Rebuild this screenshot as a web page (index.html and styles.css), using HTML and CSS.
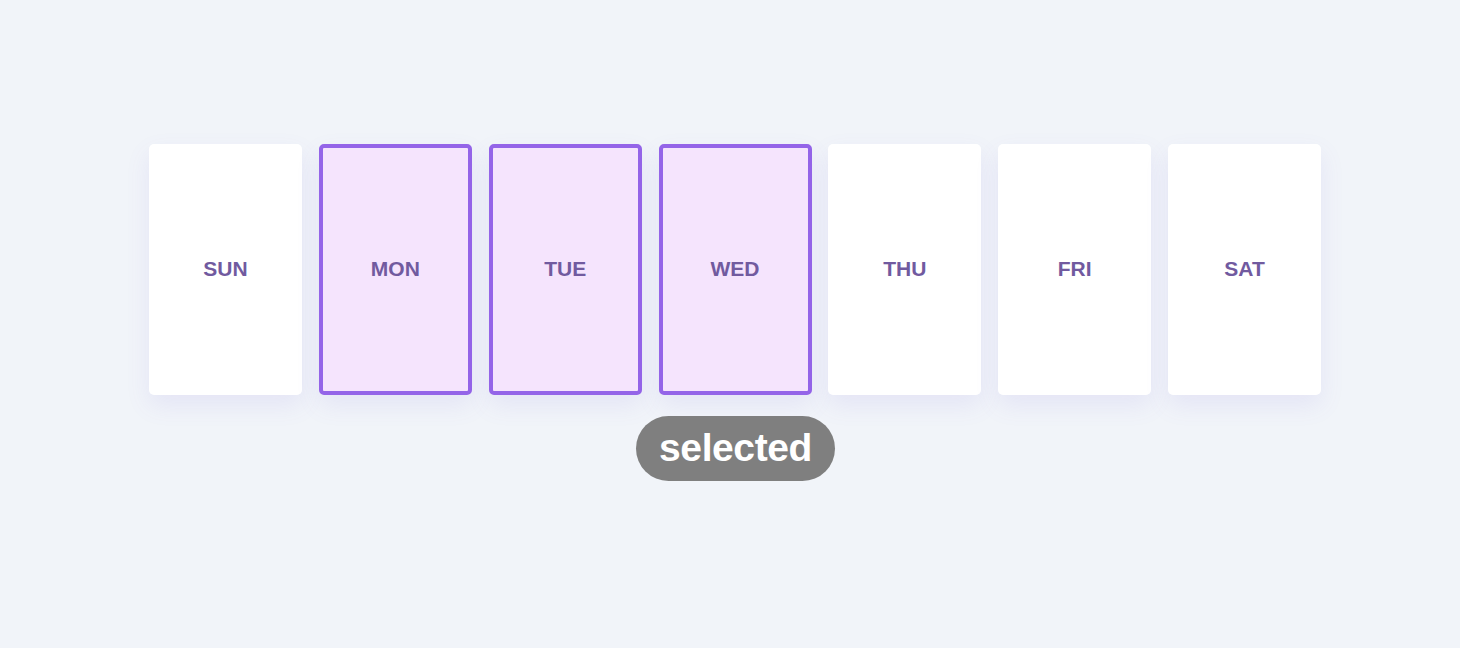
FILE: index.html
```html
<!DOCTYPE html>
<html lang="en">
<head>
  <meta charset="UTF-8" />
  <title>Day picker</title>
  <link rel="stylesheet" href="styles.css">
</head>
<body>

  <div class="picker">
    <!-- day cards -->
    <div class="days">
      <div class="day">SUN</div>
      <div class="day selected">MON</div>
      <div class="day selected">TUE</div>
      <div class="day selected">WED</div>
      <div class="day">THU</div>
      <div class="day">FRI</div>
      <div class="day">SAT</div>
    </div>

    <div class="badge-row">
      <span class="badge">selected</span>
    </div>
  </div>

</body>
</html>
```

FILE: styles.css
```css
* {
  box-sizing: border-box;
  margin: 0;
  padding: 0;
}
body {
  font-family: "Liberation Sans", Arial, sans-serif;
  background: #f1f4f9;
  height: 648px;
  overflow: hidden;
}
.picker {
  width: 1173px;
  margin: 144px 0 0 149px;
}
.days {
  display: flex;
  gap: 16.85px;
}
.day {
  width: 153px;
  height: 251px;
  padding-bottom: 2px;
  background: #fff;
  border-radius: 5px;
  box-shadow: 0 10px 24px rgba(120, 100, 220, 0.1);
  display: flex;
  align-items: center;
  justify-content: center;
  color: #715a9f;
  font-size: 21px;
  font-weight: bold;
}
.day.selected {
  background: #f5e4fd;
  border: 4px solid #9464e8;
}
.badge-row {
  display: flex;
  justify-content: center;
  margin-top: 21px;
}
.badge {
  display: inline-block;
  background: #7f7f7f;
  color: #fff;
  font-size: 39px;
  font-weight: bold;
  line-height: 64px;
  height: 65px;
  padding: 0 23px;
  border-radius: 33px;
  letter-spacing: -0.4px;
}
```
